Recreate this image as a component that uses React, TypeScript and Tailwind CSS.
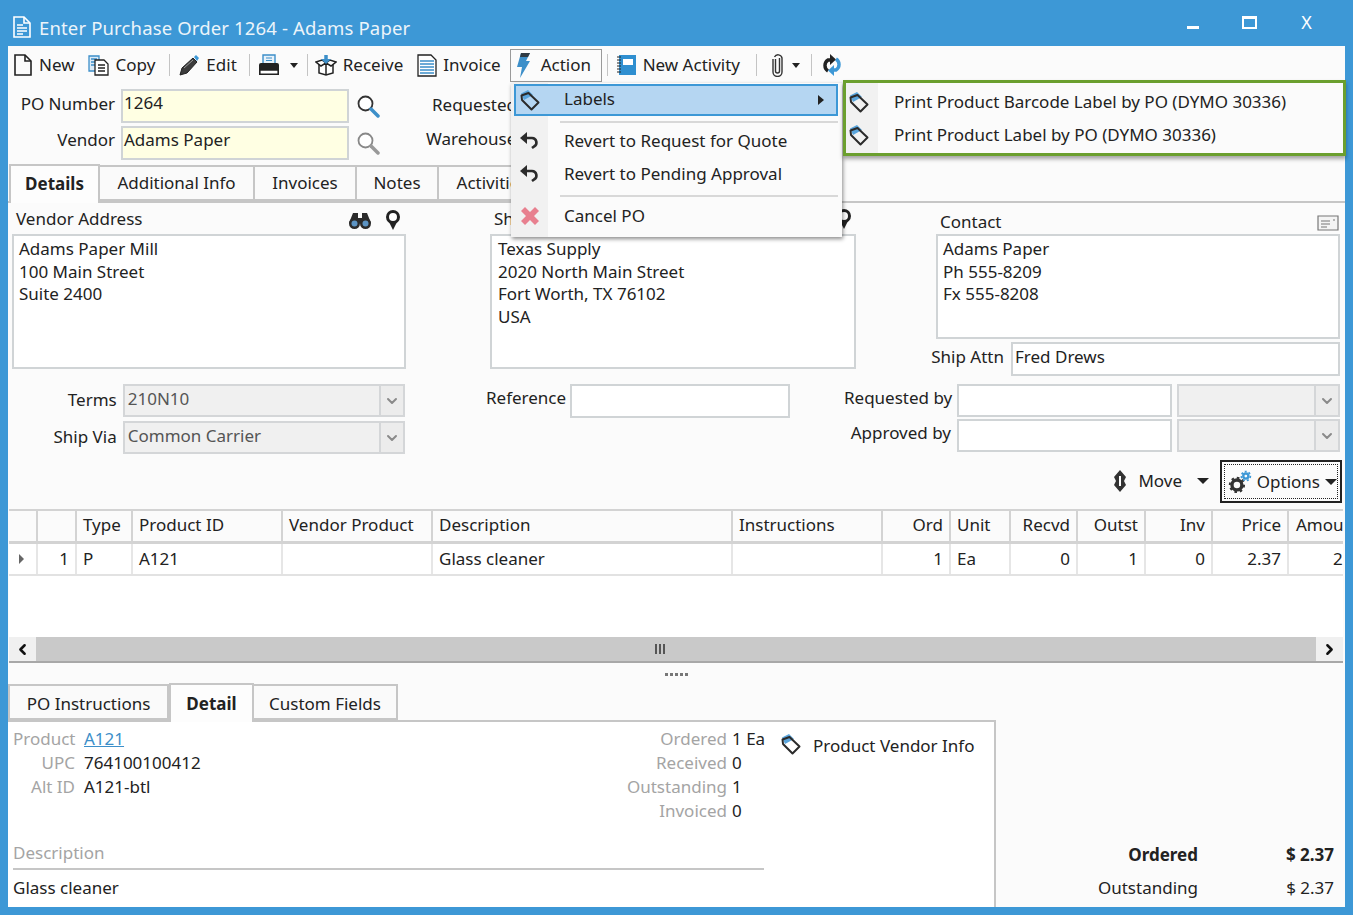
import React from 'react'
import { ChevronDown, ChevronLeft, ChevronRight } from 'lucide-react'

const DocIcon = ({ white }: { white?: boolean }) => (
  <svg width="20" height="24" viewBox="0 0 20 24" fill="none" stroke={white ? '#fff' : '#222'} strokeWidth="1.6">
    <path d="M2 2h10l6 6v14H2z" />
    <path d="M12 2v6h6" />
    {white && <path d="M5 10h6M5 13h10M5 16h10M5 19h6" />}
  </svg>
)

const CopyIcon = () => (
  <svg width="22" height="22" viewBox="0 0 22 22" fill="none" strokeWidth="1.3">
    <path d="M1 2h10v15H1z" stroke="#3d8fc9" fill="#dcebf7" />
    <path d="M3 5h6M3 8h6M3 11h6" stroke="#3d8fc9" />
    <path d="M7 6h9l4 4v11H7z" stroke="#222" fill="#fff" />
    <path d="M10 11h7M10 14h7M10 17h7" stroke="#222" />
  </svg>
)

const PencilIcon = () => (
  <svg width="21" height="22" viewBox="0 0 21 22">
    <path d="M1 21l2-7L14 4l4 4L8 19z" fill="#3c3c3c" stroke="#222" strokeWidth="1" />
    <path d="M15 3l2-2 3 3-2 3z" fill="#3d98d6" />
    <path d="M5 14l9-8" stroke="#999" strokeWidth="1" />
  </svg>
)

const PrinterIcon = () => (
  <svg width="22" height="22" viewBox="0 0 22 22">
    <path d="M5 1h12v9H5z" fill="#e8f2fa" stroke="#3d8fc9" strokeWidth="1.4" />
    <path d="M8 4h6M8 6.5h6" stroke="#3d8fc9" strokeWidth="1" />
    <path d="M1 11a2 2 0 012-2h16a2 2 0 012 2v5H1z" fill="#222" />
    <path d="M1.8 16h18.4v4.2H1.8z" fill="#fff" stroke="#222" strokeWidth="1.6" />
  </svg>
)

const BoxIcon = () => (
  <svg width="22" height="22" viewBox="0 0 22 22" fill="none" stroke="#222" strokeWidth="1.5">
    <path d="M4 10v9l7 2 7-2v-9" fill="#fff" />
    <path d="M1 8l6-2 4 3-5 3zM21 8l-6-2-4 3 5 3zM11 9v12" fill="#fff" />
    <path d="M11 1v5" stroke="#3d8fc9" strokeWidth="3.5" />
    <path d="M6 5l5 5 5-5z" fill="#3d8fc9" stroke="none" />
  </svg>
)

const InvoiceIcon = () => (
  <svg width="20" height="23" viewBox="0 0 20 23" fill="none" strokeWidth="1.3">
    <path d="M1 1h13l5 5v16H1z" stroke="#222" fill="#fff" />
    <path d="M3 7h14M3 10h14M3 13h14M3 16h14M3 19h14" stroke="#3d8fc9" />
  </svg>
)

const BoltIcon = () => (
  <svg width="15" height="25" viewBox="0 0 15 25">
    <path d="M5 0h9l-4 8h4L4 25l2-11H1z" fill="#3d8fc9" />
    <path d="M5 0h9l-2 4H4z" fill="#2f3a44" />
  </svg>
)

const NotebookIcon = () => (
  <svg width="20" height="22" viewBox="0 0 20 22">
    <path d="M2 1h17v20H2z" fill="#2f8fd0" />
    <path d="M6 5h10v6H6z" fill="#fff" />
    <path d="M0 3h4M0 6h4M0 9h4M0 12h4M0 15h4M0 18h4" stroke="#222" strokeWidth="1" />
  </svg>
)

const ClipIcon = () => (
  <svg width="13" height="24" viewBox="0 0 13 24" fill="none" stroke="#333" strokeWidth="1.4">
    <path d="M2 6v13a4.5 4.5 0 009 0V5a4 4 0 00-7.5-1" />
    <path d="M4.5 6v12a2 2 0 004 0V5" />
  </svg>
)

const RefreshIcon = () => (
  <svg width="20" height="22" viewBox="0 0 20 22" fill="none" strokeWidth="3.4">
    <path d="M6 17a6.5 6.5 0 010-11h4" stroke="#222" />
    <path d="M8 0l6 5.5L8 11z" fill="#222" />
    <path d="M14 5a6.5 6.5 0 010 11h-4" stroke="#3d98d6" />
    <path d="M12 22l-6-5.5L12 11z" fill="#3d98d6" />
  </svg>
)

const LensIcon = ({ grey }: { grey?: boolean }) => (
  <svg width="24" height="24" viewBox="0 0 24 24" fill="none">
    <circle cx="9.5" cy="9.5" r="7" stroke={grey ? '#888' : '#333'} strokeWidth="1.8" fill="#fff" />
    <path d="M15 15l7 7" stroke={grey ? '#999' : '#3d8fc9'} strokeWidth="3.5" strokeLinecap="round" />
  </svg>
)

const BinocularsIcon = () => (
  <svg width="24" height="18" viewBox="0 0 24 18">
    <path d="M5 1h5v5h4V1h5l4 10H1z" fill="#2b2b2b" />
    <circle cx="6.5" cy="11.5" r="5.5" fill="#2b2b2b" />
    <circle cx="17.5" cy="11.5" r="5.5" fill="#2b2b2b" />
    <circle cx="6.5" cy="11.5" r="3" fill="#5c94c4" />
    <circle cx="17.5" cy="11.5" r="3" fill="#5c94c4" />
  </svg>
)

const PinIcon = () => (
  <svg width="16" height="22" viewBox="0 0 16 22" fill="none">
    <path d="M4 13l4 8 4-8z" fill="#222" />
    <circle cx="8" cy="8" r="5.5" stroke="#222" strokeWidth="3" fill="#fff" />
  </svg>
)

const TagIcon = () => (
  <svg width="22" height="22" viewBox="0 0 22 22" fill="none">
    <path d="M2 4.5L9 1l5 5-9 5z" fill="#5aa5dc" />
    <path d="M2.5 6.5L9.5 4 19.5 13.5 12.5 20.5 3 11z" stroke="#2b2b2b" strokeWidth="2" fill="none" strokeLinejoin="round" />
  </svg>
)

const UndoIcon = () => (
  <svg width="19" height="18" viewBox="0 0 19 18" fill="none">
    <path d="M5 6h7a4.5 4.5 0 012 8.5L12 16" stroke="#2b2b2b" strokeWidth="2.6" />
    <path d="M7 0L0 6l7 6z" fill="#2b2b2b" />
  </svg>
)

const CrossIcon = () => (
  <svg width="20" height="20" viewBox="0 0 20 20">
    <path d="M5 1l5 5 5-5 4 4-5 5 5 5-4 4-5-5-5 5-4-4 5-5-5-5z" fill="#e8808f" />
  </svg>
)

const GearsIcon = () => (
  <svg width="24" height="24" viewBox="0 0 24 24" fill="none">
    <circle cx="9" cy="15" r="5" stroke="#333" strokeWidth="3.4" />
    <circle cx="9" cy="15" r="7.2" stroke="#333" strokeWidth="2" strokeDasharray="2.6 3" />
    <circle cx="18" cy="6" r="2.6" stroke="#3d98d6" strokeWidth="2.4" />
    <circle cx="18" cy="6" r="4.6" stroke="#3d98d6" strokeWidth="1.6" strokeDasharray="2 2" />
  </svg>
)

const MoveIcon = () => (
  <svg width="14" height="22" viewBox="0 0 14 22">
    <path d="M7 0l6 7-2 4 2 4-6 7-6-7 2-4-2-4z" fill="#333" />
    <path d="M6 6h2v10H6z" fill="#fff" />
  </svg>
)

const CardIcon = () => (
  <svg width="22" height="16" viewBox="0 0 22 16" fill="none" stroke="#777" strokeWidth="1.2">
    <path d="M1 1h20v14H1z" fill="#f4f4f4" />
    <path d="M4 6h9M4 9h9M4 12h6M16 5h2" />
  </svg>
)

const Caret = ({ className = '' }: { className?: string }) => (
  <span className={`inline-block w-0 h-0 border-x-[4.5px] border-x-transparent border-t-[5px] border-t-[#222] ${className}`} />
)

const Sep = ({ className = '' }: { className?: string }) => <span className={`w-px h-[22px] bg-[#c4c4c4] ${className}`} />

function ToolItem({ icon, label, className = '' }: { icon: React.ReactNode; label: string; className?: string }) {
  return (
    <span className={`flex items-center gap-[6px] ${className}`}>
      {icon}
      <span>{label}</span>
    </span>
  )
}

function Field({ value, className = '' }: { value?: string; className?: string }) {
  return <div className={`border-2 border-[#d0d4d6] bg-white px-[1px] truncate leading-[23px] shrink-0 ${className}`}>{value}</div>
}

function Combo({ value, className = '' }: { value?: string; className?: string }) {
  return (
    <div className={`flex border-2 border-[#d4d6d8] bg-[#f0f0f0] ${className}`}>
      <span className="flex-1 pl-[3px] text-[#555] leading-[25px]">{value}</span>
      <span className="w-[24px] border-l-2 border-[#d4d6d8] bg-[#ececec] flex items-center justify-center">
        <ChevronDown size={16} strokeWidth={3} className="text-[#8a8a8a]" />
      </span>
    </div>
  )
}

const COLUMNS = [
  { label: '', cell: '', width: 'w-[29px]', right: false, clip: false },
  { label: '', cell: '1', width: 'w-[39px]', right: true, clip: false },
  { label: 'Type', cell: 'P', width: 'w-[56px]', right: false, clip: false },
  { label: 'Product ID', cell: 'A121', width: 'w-[150px]', right: false, clip: false },
  { label: 'Vendor Product', cell: '', width: 'w-[150px]', right: false, clip: false },
  { label: 'Description', cell: 'Glass cleaner', width: 'w-[300px]', right: false, clip: false },
  { label: 'Instructions', cell: '', width: 'w-[150px]', right: false, clip: false },
  { label: 'Ord', cell: '1', width: 'w-[68px]', right: true, clip: false },
  { label: 'Unit', cell: 'Ea', width: 'w-[60px]', right: false, clip: false },
  { label: 'Recvd', cell: '0', width: 'w-[67px]', right: true, clip: false },
  { label: 'Outst', cell: '1', width: 'w-[68px]', right: true, clip: false },
  { label: 'Inv', cell: '0', width: 'w-[67px]', right: true, clip: false },
  { label: 'Price', cell: '2.37', width: 'w-[76px]', right: true, clip: false },
  { label: 'Amou', cell: '2', width: 'w-[54px]', right: false, clip: true },
]

function Tab({ label, active, className = '' }: { label: string; active?: boolean; className?: string }) {
  return (
    <div
      className={`flex items-center justify-center border-2 border-[#c6c6c6] ${
        active ? 'h-[39px] border-b-0 font-bold bg-[#fdfdfd] z-10 mb-[-2px]' : 'h-[36px] bg-[#fafafa] -ml-[2px]'
      } ${className}`}
    >
      {label}
    </div>
  )
}

export default function App() {
  return (
    <div className="relative w-[1353px] h-[915px] overflow-hidden bg-[#3d98d6] px-[8px] pb-[8px] flex flex-col font-['Noto_Sans',sans-serif] text-[17px] text-[#222]">
      {/* title bar */}
      <div className="h-[46px] flex items-center text-white text-[18.5px] tracking-[0.15px] shrink-0">
        <span className="ml-[4px] mr-[7px] flex mt-[8px]"><DocIcon white /></span>
        <span className="opacity-90 mt-[9px]">Enter Purchase Order 1264 - Adams Paper</span>
        <span className="ml-auto mr-[43px] w-[12px] h-[3px] bg-white mt-[8px]" />
        <span className="mr-[44px] w-[15px] h-[13px] border-2 border-t-[3px] border-white -mt-[2px]" />
        <span className="mr-[33px] text-[18px] leading-none -mt-[2px]">X</span>
      </div>

      <div className="flex-1 bg-[#fbfbfb] flex flex-col min-h-0">
        {/* toolbar */}
        <div className="h-[38px] flex items-center pl-[5px] shrink-0">
          <ToolItem icon={<DocIcon />} label="New" />
          <ToolItem icon={<CopyIcon />} label="Copy" className="ml-[13px]" />
          <Sep className="ml-[14px]" />
          <ToolItem icon={<PencilIcon />} label="Edit" className="ml-[9px]" />
          <Sep className="ml-[12px]" />
          <span className="ml-[8px] flex"><PrinterIcon /></span>
          <Caret className="ml-[10px]" />
          <Sep className="ml-[9px]" />
          <ToolItem icon={<BoxIcon />} label="Receive" className="ml-[7px]" />
          <ToolItem icon={<InvoiceIcon />} label="Invoice" className="ml-[14px]" />
          <span className="ml-[9px] h-[33px] w-[92px] border border-[#9a9a9a] flex items-center pl-[5px] gap-[10px]">
            <BoltIcon />
            <span>Action</span>
          </span>
          <Sep className="ml-[5px]" />
          <ToolItem icon={<NotebookIcon />} label="New Activity" className="ml-[9px]" />
          <Sep className="ml-[16px]" />
          <span className="ml-[14px] flex"><ClipIcon /></span>
          <Caret className="ml-[8px]" />
          <Sep className="ml-[11px]" />
          <span className="ml-[10px] flex"><RefreshIcon /></span>
        </div>

        {/* po header */}
        <div className="relative h-[81px] shrink-0 pt-[5px] flex flex-col gap-[3px]">
          <div className="flex items-center h-[34px]">
            <span className="w-[107px] text-right mb-[4px]">PO Number</span>
            <Field value="1264" className="ml-[6px] w-[228px] h-[34px] !bg-[#ffffe3]" />
            <span className="ml-[7px] flex"><LensIcon /></span>
            <span className="ml-[52px] w-[100px] whitespace-nowrap mb-[2px]">Requested</span>
          </div>
          <div className="flex items-center h-[34px]">
            <span className="w-[107px] text-right mb-[6px]">Vendor</span>
            <Field value="Adams Paper" className="ml-[6px] w-[228px] h-[34px] !bg-[#ffffe3]" />
            <span className="ml-[7px] flex"><LensIcon grey /></span>
            <span className="ml-[46px] w-[100px] whitespace-nowrap mb-[8px]">Warehouse</span>
          </div>
        </div>

        {/* tabs */}
        <div className="h-[38px] flex items-end border-b-2 border-[#c6c6c6] pl-[1px] shrink-0">
          <Tab label="Details" active className="w-[91px] pb-[2px]" />
          <Tab label="Additional Info" className="w-[157px]" />
          <Tab label="Invoices" className="w-[104px]" />
          <Tab label="Notes" className="w-[84px]" />
          <Tab label="Activities" className="w-[110px]" />
        </div>

        {/* address blocks */}
        <div className="flex pl-[4px] h-[175px] shrink-0">
          <div className="w-[394px] flex flex-col">
            <div className="h-[31px] flex items-center pl-[4px] pr-[5px]">
              <span className="mt-[1px]">Vendor Address</span>
              <span className="ml-auto flex mt-[4px] mr-[13px]"><BinocularsIcon /></span>
              <span className="flex mt-[2px]"><PinIcon /></span>
            </div>
            <div className="h-[135px] border-2 border-[#d0d4d6] bg-white pl-[5px] pt-[2px] leading-[22.5px]">
              Adams Paper Mill<br />100 Main Street<br />Suite 2400
            </div>
          </div>
          <div className="ml-[84px] w-[366px] flex flex-col">
            <div className="h-[31px] flex items-center pl-[4px]">
              <span className="mt-[1px]">Ship To</span>
              <span className="ml-auto mr-[4px] flex"><PinIcon /></span>
            </div>
            <div className="h-[135px] border-2 border-[#d0d4d6] bg-white pl-[6px] pt-[2px] leading-[22.5px]">
              Texas Supply<br />2020 North Main Street<br />Fort Worth, TX 76102<br />USA
            </div>
          </div>
          <div className="ml-[80px] w-[404px] flex flex-col">
            <div className="h-[31px] flex items-end pl-[4px]">
              <span className="mb-0">Contact</span>
              <span className="ml-auto mb-[3px] mr-[1px] flex"><CardIcon /></span>
            </div>
            <div className="h-[105px] border-2 border-[#d0d4d6] bg-white pl-[5px] pt-[2px] leading-[22.5px]">
              Adams Paper<br />Ph 555-8209<br />Fx 555-8208
            </div>
            <div className="flex items-center justify-end mt-[3px] -ml-[5px]">
              <span className="whitespace-nowrap mb-[4px]">Ship Attn</span>
              <Field value="Fred Drews" className="ml-[7px] w-[329px] h-[34px] pl-[2px] pt-[1px]" />
            </div>
          </div>
        </div>

        {/* terms / reference rows */}
        <div className="flex h-[78px] pt-[6px] shrink-0">
          <div className="w-[397px] flex flex-col gap-[4px]">
            <div className="flex items-center">
              <span className="w-[109px] text-right mb-[2px]">Terms</span>
              <Combo value="210N10" className="ml-[6px] w-[283px] h-[33px]" />
            </div>
            <div className="flex items-center">
              <span className="w-[109px] text-right mb-[2px]">Ship Via</span>
              <Combo value="Common Carrier" className="ml-[6px] w-[283px] h-[33px]" />
            </div>
          </div>
          <div className="ml-[81px] flex items-start">
            <span className="w-[78px] text-right whitespace-nowrap leading-[28px]">Reference</span>
            <Field className="ml-[6px] w-[220px] h-[34px]" />
          </div>
          <div className="ml-[54px] flex flex-col gap-[2px]">
            <div className="flex items-center">
              <span className="w-[107px] text-right whitespace-nowrap mb-[6px]">Requested by</span>
              <Field className="ml-[6px] w-[215px] h-[33px]" />
              <Combo className="ml-[5px] w-[163px] h-[33px]" />
            </div>
            <div className="flex items-center">
              <span className="w-[107px] text-right whitespace-nowrap mb-[6px]">Approved by</span>
              <Field className="ml-[6px] w-[215px] h-[33px]" />
              <Combo className="ml-[5px] w-[163px] h-[33px]" />
            </div>
          </div>
        </div>

        {/* move / options */}
        <div className="h-[53px] flex items-start justify-end pt-[4px] pr-[3px] shrink-0">
          <div className="h-[42px] flex items-center">
            <MoveIcon />
            <span className="ml-[11px]">Move</span>
            <Caret className="ml-[15px] !border-x-[6px] !border-t-[6px]" />
          </div>
          <div className="ml-[11px] w-[122px] h-[43px] border-2 border-[#222] p-[2px]">
            <div className="h-full border border-dotted border-[#222] flex items-center pl-[3px]">
              <GearsIcon />
              <span className="ml-[5px]">Options</span>
              <Caret className="ml-[5px] !border-x-[6px] !border-t-[6px]" />
            </div>
          </div>
        </div>

        {/* grid */}
        <div className="ml-[1px] mr-[2px] shrink-0 overflow-hidden">
          <div className="flex h-[35px] border-t-2 border-b-[3px] border-[#d3d3d3] bg-[#fbfbfb]">
            {COLUMNS.map((c, i) => (
              <div key={i} className={`${c.width} shrink-0 ${c.clip ? 'pl-[7px]' : 'border-r-2 px-[6px]'} border-[#d3d3d3] leading-[27px] whitespace-nowrap overflow-hidden ${c.right ? 'text-right' : ''}`}>
                {c.label}
              </div>
            ))}
          </div>
          <div className="flex h-[32px] border-b-2 border-[#e2e2e2] bg-white">
            {COLUMNS.map((c, i) => (
              <div key={i} className={`${c.width} shrink-0 ${c.clip ? 'pl-[44px]' : 'border-r-2 px-[6px]'} border-[#e6e6e6] leading-[30px] whitespace-nowrap overflow-hidden ${c.right ? 'text-right' : ''}`}>
                {i === 0 ? <span className="block mt-[10px] w-0 h-0 border-y-[5px] border-y-transparent border-l-[5px] border-l-[#666] ml-[4px]" /> : c.cell}
              </div>
            ))}
          </div>
          <div className="h-[61px] bg-white" />
          <div className="h-[26px] bg-[#c9c9c9] flex items-center border-b-2 border-[#a8a8a8]">
            <span className="w-[27px] h-full bg-[#f0f0f0] flex items-center justify-center">
              <ChevronLeft size={17} strokeWidth={3.5} className="text-[#111]" />
            </span>
            <span className="flex-1 flex justify-center gap-[2px] pr-[32px]">
              <span className="w-[2px] h-[10px] bg-[#555]" />
              <span className="w-[2px] h-[10px] bg-[#555]" />
              <span className="w-[2px] h-[10px] bg-[#555]" />
            </span>
            <span className="w-[27px] h-full bg-[#f0f0f0] flex items-center justify-center">
              <ChevronRight size={17} strokeWidth={3.5} className="text-[#111]" />
            </span>
          </div>
        </div>

        {/* splitter */}
        <div className="h-[23px] flex items-center justify-center gap-[2px] shrink-0">
          {[0, 1, 2, 3, 4].map(i => <span key={i} className="w-[3px] h-[3px] bg-[#777]" />)}
        </div>

        {/* bottom tabs */}
        <div className="h-[36px] flex items-end w-[988px] border-b-2 border-[#c6c6c6] shrink-0">
          <Tab label="PO Instructions" className="w-[161px] !ml-0 pt-[3px]" />
          <Tab label="Detail" active className="w-[85px]" />
          <Tab label="Custom Fields" className="w-[146px] pt-[3px]" />
        </div>

        {/* bottom panel */}
        <div className="flex-1 flex min-h-0">
          <div className="w-[988px] border-r-2 border-[#c6c6c6] bg-white flex flex-col pl-[5px] pt-[5px]">
            <div className="flex h-[100px]">
              <div className="w-[306px] leading-[24px]">
                <div className="flex"><span className="w-[62px] text-right text-[#a4a4a4]">Product</span><span className="ml-[9px] text-[#3d8fc9] underline">A121</span></div>
                <div className="flex"><span className="w-[62px] text-right text-[#a4a4a4]">UPC</span><span className="ml-[9px]">764100100412</span></div>
                <div className="flex"><span className="w-[62px] text-right text-[#a4a4a4]">Alt ID</span><span className="ml-[9px]">A121-btl</span></div>
              </div>
              <div className="w-[454px] leading-[24px]">
                <div className="flex"><span className="w-[408px] text-right text-[#a4a4a4]">Ordered</span><span className="ml-[5px]">1 Ea</span></div>
                <div className="flex"><span className="w-[408px] text-right text-[#a4a4a4]">Received</span><span className="ml-[5px]">0</span></div>
                <div className="flex"><span className="w-[408px] text-right text-[#a4a4a4]">Outstanding</span><span className="ml-[5px]">1</span></div>
                <div className="flex"><span className="w-[408px] text-right text-[#a4a4a4]">Invoiced</span><span className="ml-[5px]">0</span></div>
              </div>
              <div className="flex items-start pt-[6px] ml-[7px]">
                <TagIcon />
                <span className="ml-[11px]">Product Vendor Info</span>
              </div>
            </div>
            <div className="mt-[14px] text-[#a4a4a4] h-[27px] w-[751px] border-b-2 border-[#c6c6c6] box-content leading-[24px]">Description</div>
            <div className="mt-[6px] leading-[24px]">Glass cleaner</div>
          </div>
          <div className="flex-1 flex flex-col items-end justify-end pb-[7px] pr-[11px]">
            <div className="flex font-bold mb-[7px]">
              <span>Ordered</span>
              <span className="w-[136px] text-right">$ 2.37</span>
            </div>
            <div className="flex">
              <span>Outstanding</span>
              <span className="w-[136px] text-right">$ 2.37</span>
            </div>
          </div>
        </div>
      </div>

      {/* action dropdown */}
      <div className="absolute left-[511px] top-[83px] w-[331px] h-[154px] bg-[#fbfbfb] shadow-[1px_2px_4px_rgba(0,0,0,0.45)] flex">
        <div className="w-[37px] bg-[#f1f1f1] shrink-0" />
        <div className="absolute inset-0 flex flex-col">
          <div className="ml-[3px] mr-[4px] mt-[1px] h-[32px] bg-[#b5d6f2] border-2 border-[#3d98d6] flex items-center">
            <span className="ml-[3px] flex"><TagIcon /></span>
            <span className="ml-[23px] mb-[2px]">Labels</span>
            <span className="ml-auto mr-[12px] w-0 h-0 border-y-[5px] border-y-transparent border-l-[6px] border-l-[#222]" />
          </div>
          <div className="ml-[49px] mr-[4px] mt-[5px] h-[2px] bg-[#d8d8d8]" />
          <div className="h-[33px] mt-[1px] flex items-center">
            <span className="ml-[9px] w-[20px] flex"><UndoIcon /></span>
            <span className="ml-[24px]">Revert to Request for Quote</span>
          </div>
          <div className="h-[33px] flex items-center">
            <span className="ml-[9px] w-[20px] flex"><UndoIcon /></span>
            <span className="ml-[24px]">Revert to Pending Approval</span>
          </div>
          <div className="ml-[49px] mr-[4px] mt-[5px] h-[2px] bg-[#d8d8d8]" />
          <div className="h-[38px] flex items-center">
            <span className="ml-[9px] w-[20px] flex"><CrossIcon /></span>
            <span className="ml-[24px]">Cancel PO</span>
          </div>
        </div>
      </div>

      {/* labels submenu */}
      <div className="absolute left-[843px] top-[80px] w-[503px] h-[76px] border-[3px] border-[#6b9f2e] bg-[#fbfbfb] shadow-[0_3px_4px_rgba(0,0,0,0.35)] flex">
        <div className="w-[32px] bg-[#f1f1f1] shrink-0" />
        <div className="absolute inset-0 flex flex-col justify-center">
          <div className="h-[33px] flex items-center">
            <span className="ml-[2px] flex"><TagIcon /></span>
            <span className="ml-[24px]">Print Product Barcode Label by PO (DYMO 30336)</span>
          </div>
          <div className="h-[33px] flex items-center">
            <span className="ml-[2px] flex"><TagIcon /></span>
            <span className="ml-[24px]">Print Product Label by PO (DYMO 30336)</span>
          </div>
        </div>
      </div>
    </div>
  )
}
